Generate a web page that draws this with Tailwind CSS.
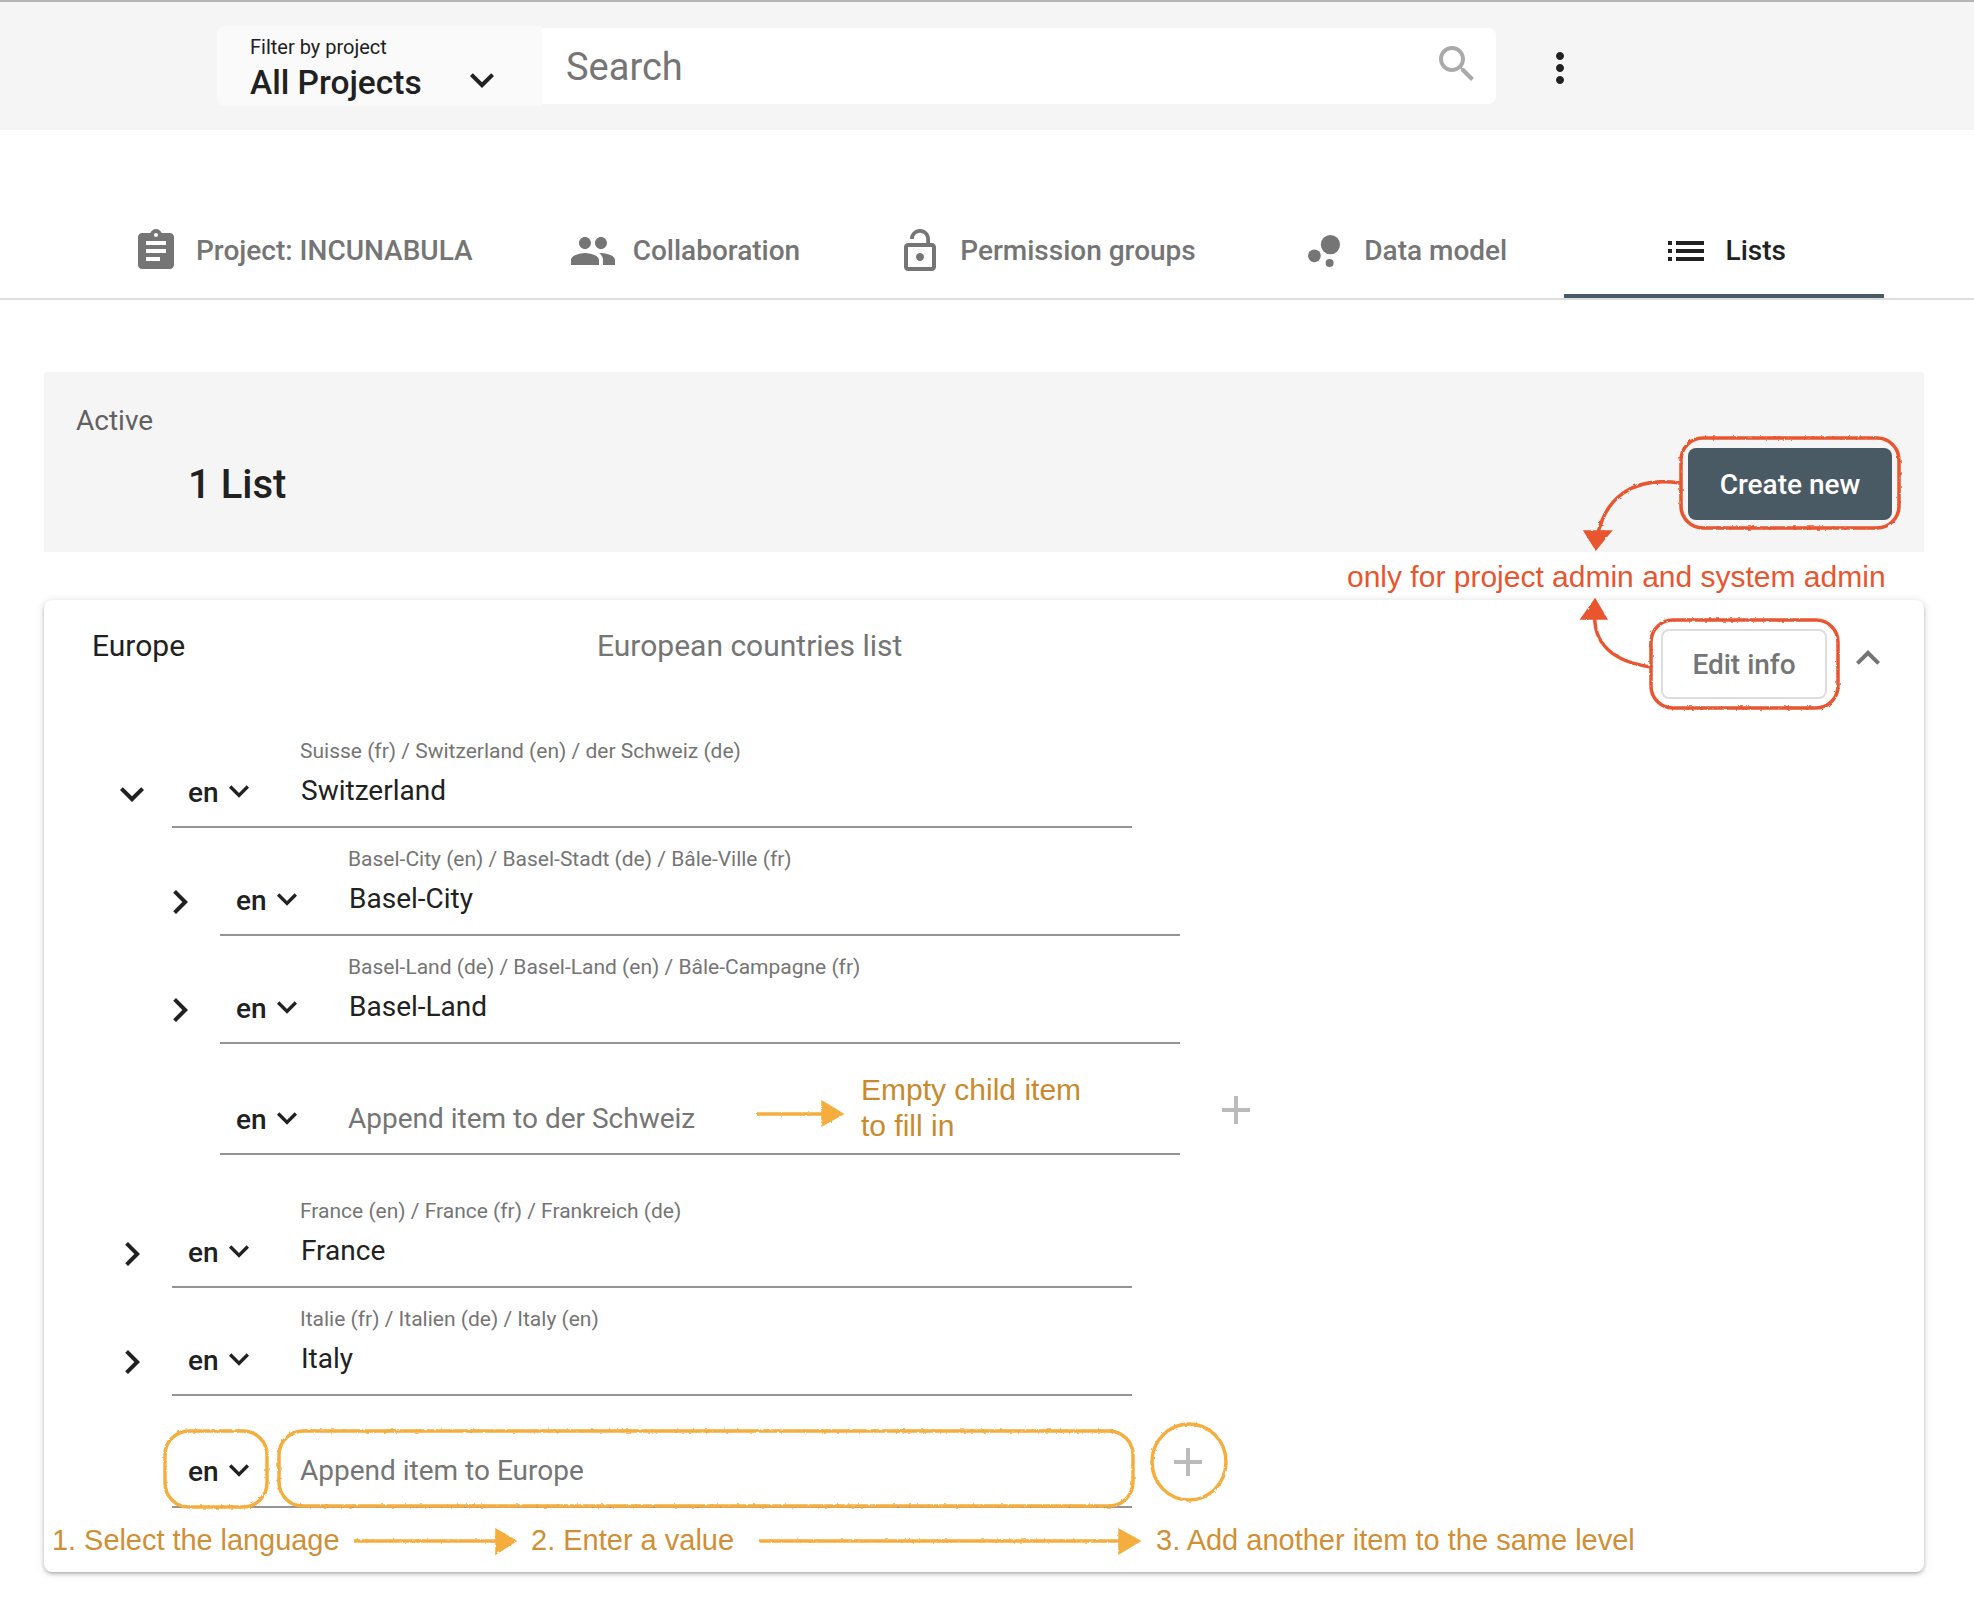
<!DOCTYPE html>
<html lang="en">
<head>
    <meta charset="UTF-8">
    <meta name="viewport" content="width=device-width, initial-scale=1.0">
    <title>Lists - INCUNABULA</title>
    <script src="https://cdn.jsdelivr.net/npm/@tailwindcss/browser@4"></script>
</head>
<body class="bg-white">
<div class="relative w-[1974px] h-[1624px] overflow-hidden font-[family-name:Roboto,sans-serif] text-[#212121]">

    <!-- Top bar -->
    <header class="h-[130px] border-t-2 border-[#b5b5b5] bg-[#f5f5f5] flex items-start pl-[217px]">
        <div class="w-[325px] h-[80px] mt-[24px] bg-[#fafafa] rounded-l-lg pl-[33px] pt-[8px] relative">
            <p class="text-[20px] leading-[26px]">Filter by project</p>
            <p class="text-[33.5px] leading-[44px] font-medium mt-[1px]">All Projects</p>
            <svg class="absolute left-[241px] top-[30px] w-[48px] h-[48px] fill-[#212121]" viewBox="0 0 24 24"><path d="M7.41 8.59L12 13.17l4.59-4.58L18 10l-6 6-6-6 1.41-1.41z"/></svg>
        </div>
        <div class="w-[954px] h-[76px] mt-[26px] bg-white rounded-r-lg flex items-center justify-between pl-[24px] pr-[15px]">
            <span class="text-[38px] text-[#757575] pt-[2px]">Search</span>
            <svg class="w-[48px] h-[48px] fill-[#aaaaaa] mb-[4px]" viewBox="0 0 24 24"><path d="M15.5 14h-.79l-.28-.27C15.41 12.59 16 11.11 16 9.5 16 5.91 13.09 3 9.5 3S3 5.91 3 9.5 5.91 16 9.5 16c1.61 0 3.09-.59 4.23-1.57l.27.28v.79l5 4.99L20.49 19l-4.99-5zm-6 0C7.01 14 5 11.99 5 9.5S7.01 5 9.5 5 14 7.01 14 9.5 11.99 14 9.5 14z"/></svg>
        </div>
        <svg class="w-[48px] h-[48px] ml-[40px] mt-[42px] fill-[#212121]" viewBox="0 0 24 24"><path d="M12 8c1.1 0 2-.9 2-2s-.9-2-2-2-2 .9-2 2 .9 2 2 2zm0 2c-1.1 0-2 .9-2 2s.9 2 2 2 2-.9 2-2-.9-2-2-2zm0 6c-1.1 0-2 .9-2 2s.9 2 2 2 2-.9 2-2-.9-2-2-2z"/></svg>
    </header>

    <!-- Tabs -->
    <nav class="mt-[70px] h-[100px] border-b-2 border-[#dddddd] flex pl-[84px] text-[28px] font-medium text-[#757575]">
        <a class="h-full min-w-[320px] px-12 pt-[8px] border-b-4 border-transparent flex items-center justify-center">
            <svg class="w-[48px] h-[48px] mr-[16px] fill-[#757575]" viewBox="0 0 24 24"><path d="M19 3h-4.18C14.4 1.84 13.3 1 12 1c-1.3 0-2.4.84-2.82 2H5c-1.1 0-2 .9-2 2v14c0 1.1.9 2 2 2h14c1.1 0 2-.9 2-2V5c0-1.1-.9-2-2-2zm-7 0c.55 0 1 .45 1 1s-.45 1-1 1-1-.45-1-1 .45-1 1-1zm2 14H7v-2h7v2zm3-4H7v-2h10v2zm0-4H7V7h10v2z"/></svg>
            <span>Project: INCUNABULA</span>
        </a>
        <a class="h-full min-w-[320px] px-12 pt-[8px] border-b-4 border-transparent flex items-center justify-center">
            <svg class="w-[48px] h-[48px] mr-[16px] fill-[#757575]" viewBox="0 0 24 24"><path d="M16 11c1.66 0 2.99-1.34 2.99-3S17.66 5 16 5c-1.66 0-3 1.34-3 3s1.34 3 3 3zm-8 0c1.66 0 2.99-1.34 2.99-3S9.66 5 8 5C6.34 5 5 6.34 5 8s1.34 3 3 3zm0 2c-2.33 0-7 1.17-7 3.5V19h14v-2.5c0-2.33-4.67-3.5-7-3.5zm8 0c-.29 0-.62.02-.97.05 1.16.84 1.97 1.97 1.97 3.45V19h6v-2.5c0-2.33-4.67-3.5-7-3.5z"/></svg>
            <span>Collaboration</span>
        </a>
        <a class="h-full min-w-[320px] px-12 pt-[8px] border-b-4 border-transparent flex items-center justify-center">
            <svg class="w-[48px] h-[48px] mr-[16px] fill-[#757575]" viewBox="0 0 24 24"><path d="M12 17c1.1 0 2-.9 2-2s-.9-2-2-2-2 .9-2 2 .9 2 2 2zm6-9h-1V6c0-2.76-2.24-5-5-5S7 3.24 7 6h1.9c0-1.71 1.39-3.1 3.1-3.1 1.71 0 3.1 1.39 3.1 3.1v2H6c-1.1 0-2 .9-2 2v10c0 1.1.9 2 2 2h12c1.1 0 2-.9 2-2V10c0-1.1-.9-2-2-2zm0 12H6V10h12v10z"/></svg>
            <span>Permission groups</span>
        </a>
        <a class="h-full min-w-[320px] px-12 pt-[8px] border-b-4 border-transparent flex items-center justify-center">
            <svg class="w-[48px] h-[48px] mr-[16px] fill-[#757575]" viewBox="0 0 24 24"><circle cx="7.2" cy="14.4" r="3.2"/><circle cx="14.8" cy="18" r="2"/><circle cx="15.2" cy="8.8" r="4.8"/></svg>
            <span>Data model</span>
        </a>
        <a class="h-full min-w-[320px] px-12 pt-[8px] border-b-4 border-[#4a5a65] text-[#212121] flex items-center justify-center">
            <svg class="w-[48px] h-[48px] mr-[16px] fill-[#212121]" viewBox="0 0 24 24"><path d="M3 13h2v-2H3v2zm0 4h2v-2H3v2zm0-8h2V7H3v2zm4 4h14v-2H7v2zm0 4h14v-2H7v2zM7 7v2h14V7H7z"/></svg>
            <span>Lists</span>
        </a>
    </nav>

    <!-- Active summary -->
    <section class="w-[1880px] ml-[44px] mt-[72px] h-[180px] bg-[#f5f5f5] rounded-t flex justify-between items-end pb-[32px] pr-[32px]">
        <div class="pl-[32px] mb-[11px]">
            <p class="text-[28px] leading-[40px] text-[#616161]">Active</p>
            <p class="text-[40px] leading-[48px] font-medium pl-[112px] mt-[20px]">1 List</p>
        </div>
        <button class="w-[204px] h-[72px] pt-[2px] bg-[#4a5a65] rounded-lg text-white text-[28px] font-medium">Create new</button>
    </section>

    <!-- List card -->
    <section class="w-[1880px] ml-[44px] mt-[48px] h-[972px] bg-white rounded-lg shadow-[0_2px_4px_-1px_rgba(0,0,0,0.35),0_1px_10px_rgba(0,0,0,0.12)]">
        <div class="h-[120px] flex items-start pt-[26px] pl-[48px] pr-[32px] text-[30px] leading-[40px]">
            <span class="w-[505px]">Europe</span>
            <span class="text-[#757575]">European countries list</span>
            <button class="ml-auto w-[166px] h-[70px] mt-[3px] pt-[2px] border-2 border-[#dddddd] rounded-lg text-[28px] font-medium text-[#757575]">Edit info</button>
            <svg class="w-[48px] h-[48px] ml-[17px] mt-[8px] fill-[#757575]" viewBox="0 0 24 24"><path d="M7.41 15.41L12 10.83l4.59 4.58L18 14l-6-6-6 6z"/></svg>
        </div>

        <!-- Switzerland -->
        <div class="flex h-[108px] ml-[48px]">
            <div class="w-[80px] flex justify-center items-end pb-[10px]">
                <svg class="w-[48px] h-[48px] fill-[#212121]" viewBox="0 0 24 24"><path d="M7.41 8.59L12 13.17l4.59-4.58L18 10l-6 6-6-6 1.41-1.41z"/></svg>
            </div>
            <div class="w-[960px] border-b-2 border-[#949494] flex">
                <div class="w-[128px] pl-[16px] pb-[13px] flex items-end text-[28px] leading-[40px] font-medium">
                    <span>en</span>
                    <svg class="w-[40px] h-[40px] -mt-[2px] mb-[2px] fill-[#212121]" viewBox="0 0 24 24"><path d="M7.41 8.59L12 13.17l4.59-4.58L18 10l-6 6-6-6 1.41-1.41z"/></svg>
                </div>
                <div class="pt-[17px]">
                    <p class="text-[21px] leading-[28px] text-[#757575]">Suisse (fr) / Switzerland (en) / der Schweiz (de)</p>
                    <p class="text-[28px] leading-[40px] mt-[6px] pl-[1px]">Switzerland</p>
                </div>
            </div>
        </div>

        <!-- Basel-City -->
        <div class="flex h-[108px] ml-[96px]">
            <div class="w-[80px] flex justify-center items-end pb-[10px]">
                <svg class="w-[48px] h-[48px] fill-[#212121]" viewBox="0 0 24 24"><path d="M8.59 16.59L13.17 12 8.59 7.41 10 6l6 6-6 6-1.41-1.41z"/></svg>
            </div>
            <div class="w-[960px] border-b-2 border-[#949494] flex">
                <div class="w-[128px] pl-[16px] pb-[13px] flex items-end text-[28px] leading-[40px] font-medium">
                    <span>en</span>
                    <svg class="w-[40px] h-[40px] -mt-[2px] mb-[2px] fill-[#212121]" viewBox="0 0 24 24"><path d="M7.41 8.59L12 13.17l4.59-4.58L18 10l-6 6-6-6 1.41-1.41z"/></svg>
                </div>
                <div class="pt-[17px]">
                    <p class="text-[21px] leading-[28px] text-[#757575]">Basel-City (en) / Basel-Stadt (de) / Bâle-Ville (fr)</p>
                    <p class="text-[28px] leading-[40px] mt-[6px] pl-[1px]">Basel-City</p>
                </div>
            </div>
        </div>

        <!-- Basel-Land -->
        <div class="flex h-[108px] ml-[96px]">
            <div class="w-[80px] flex justify-center items-end pb-[10px]">
                <svg class="w-[48px] h-[48px] fill-[#212121]" viewBox="0 0 24 24"><path d="M8.59 16.59L13.17 12 8.59 7.41 10 6l6 6-6 6-1.41-1.41z"/></svg>
            </div>
            <div class="w-[960px] border-b-2 border-[#949494] flex">
                <div class="w-[128px] pl-[16px] pb-[13px] flex items-end text-[28px] leading-[40px] font-medium">
                    <span>en</span>
                    <svg class="w-[40px] h-[40px] -mt-[2px] mb-[2px] fill-[#212121]" viewBox="0 0 24 24"><path d="M7.41 8.59L12 13.17l4.59-4.58L18 10l-6 6-6-6 1.41-1.41z"/></svg>
                </div>
                <div class="pt-[17px]">
                    <p class="text-[21px] leading-[28px] text-[#757575]">Basel-Land (de) / Basel-Land (en) / Bâle-Campagne (fr)</p>
                    <p class="text-[28px] leading-[40px] mt-[6px] pl-[1px]">Basel-Land</p>
                </div>
            </div>
        </div>

        <!-- Append child -->
        <div class="flex h-[111px] ml-[176px]">
            <div class="w-[960px] border-b-2 border-[#949494] flex">
                <div class="w-[128px] pl-[16px] pb-[13px] flex items-end text-[28px] leading-[40px] font-medium">
                    <span>en</span>
                    <svg class="w-[40px] h-[40px] -mt-[2px] mb-[2px] fill-[#212121]" viewBox="0 0 24 24"><path d="M7.41 8.59L12 13.17l4.59-4.58L18 10l-6 6-6-6 1.41-1.41z"/></svg>
                </div>
                <div class="flex items-end pb-[14px]">
                    <p class="text-[28px] leading-[40px] text-[#757575]">Append item to der Schweiz</p>
                </div>
            </div>
            <svg class="w-[48px] h-[48px] ml-[32px] mt-[42px] fill-[#bbbbbb]" viewBox="0 0 24 24"><path d="M19 13h-6v6h-2v-6H5v-2h6V5h2v6h6v2z"/></svg>
        </div>

        <!-- France -->
        <div class="flex h-[108px] ml-[48px] mt-[25px]">
            <div class="w-[80px] flex justify-center items-end pb-[10px]">
                <svg class="w-[48px] h-[48px] fill-[#212121]" viewBox="0 0 24 24"><path d="M8.59 16.59L13.17 12 8.59 7.41 10 6l6 6-6 6-1.41-1.41z"/></svg>
            </div>
            <div class="w-[960px] border-b-2 border-[#949494] flex">
                <div class="w-[128px] pl-[16px] pb-[13px] flex items-end text-[28px] leading-[40px] font-medium">
                    <span>en</span>
                    <svg class="w-[40px] h-[40px] -mt-[2px] mb-[2px] fill-[#212121]" viewBox="0 0 24 24"><path d="M7.41 8.59L12 13.17l4.59-4.58L18 10l-6 6-6-6 1.41-1.41z"/></svg>
                </div>
                <div class="pt-[17px]">
                    <p class="text-[21px] leading-[28px] text-[#757575]">France (en) / France (fr) / Frankreich (de)</p>
                    <p class="text-[28px] leading-[40px] mt-[6px] pl-[1px]">France</p>
                </div>
            </div>
        </div>

        <!-- Italy -->
        <div class="flex h-[108px] ml-[48px]">
            <div class="w-[80px] flex justify-center items-end pb-[10px]">
                <svg class="w-[48px] h-[48px] fill-[#212121]" viewBox="0 0 24 24"><path d="M8.59 16.59L13.17 12 8.59 7.41 10 6l6 6-6 6-1.41-1.41z"/></svg>
            </div>
            <div class="w-[960px] border-b-2 border-[#949494] flex">
                <div class="w-[128px] pl-[16px] pb-[13px] flex items-end text-[28px] leading-[40px] font-medium">
                    <span>en</span>
                    <svg class="w-[40px] h-[40px] -mt-[2px] mb-[2px] fill-[#212121]" viewBox="0 0 24 24"><path d="M7.41 8.59L12 13.17l4.59-4.58L18 10l-6 6-6-6 1.41-1.41z"/></svg>
                </div>
                <div class="pt-[17px]">
                    <p class="text-[21px] leading-[28px] text-[#757575]">Italie (fr) / Italien (de) / Italy (en)</p>
                    <p class="text-[28px] leading-[40px] mt-[6px] pl-[1px]">Italy</p>
                </div>
            </div>
        </div>

        <!-- Append root item -->
        <div class="flex h-[112px] ml-[128px]">
            <div class="w-[960px] border-b-2 border-[#949494] flex">
                <div class="w-[128px] pl-[16px] pb-[14px] flex items-end text-[28px] leading-[40px] font-medium">
                    <span>en</span>
                    <svg class="w-[40px] h-[40px] -mt-[2px] mb-[2px] fill-[#212121]" viewBox="0 0 24 24"><path d="M7.41 8.59L12 13.17l4.59-4.58L18 10l-6 6-6-6 1.41-1.41z"/></svg>
                </div>
                <div class="flex items-end pb-[15px]">
                    <p class="text-[28px] leading-[40px] text-[#757575]">Append item to Europe</p>
                </div>
            </div>
            <svg class="w-[48px] h-[48px] ml-[32px] mt-[42px] fill-[#bbbbbb]" viewBox="0 0 24 24"><path d="M19 13h-6v6h-2v-6H5v-2h6V5h2v6h6v2z"/></svg>
        </div>
    </section>

    <!-- Hand drawn annotations on top of the screenshot -->
    <svg class="absolute left-0 top-0 w-[1974px] h-[1624px] pointer-events-none" viewBox="0 0 1974 1624" fill="none">
        <defs>
            <filter id="rough" x="-5%" y="-5%" width="110%" height="110%">
                <feTurbulence type="fractalNoise" baseFrequency="0.25" numOctaves="2" seed="3"/>
                <feDisplacementMap in="SourceGraphic" scale="2.5"/>
            </filter>
        </defs>
        <g filter="url(#rough)" stroke="#e9552e" stroke-width="3.5">
            <rect x="1681" y="438" width="218" height="90" rx="22"/>
            <rect x="1651" y="620" width="187" height="88" rx="22"/>
            <path d="M1680 483 C1630 476 1604 500 1597 538"/>
            <path d="M1651 667 C1615 662 1592 645 1595 612"/>
            <path d="M1586 532 L1609 532 L1596 548 Z" fill="#e9552e"/>
            <path d="M1583 618 L1605 618 L1595 601 Z" fill="#e9552e"/>
        </g>
        <g filter="url(#rough)" stroke="#f5ad3c" stroke-width="3.5">
            <rect x="165" y="1431" width="102" height="76" rx="24"/>
            <rect x="279" y="1431" width="854" height="75" rx="24"/>
            <ellipse cx="1189" cy="1462" rx="37" ry="38"/>
            <path d="M757 1114 H826"/>
            <path d="M354 1541 H500"/>
            <path d="M759 1541 H1123"/>
            <path d="M823 1103 L841 1114 L823 1124 Z" fill="#f5ad3c"/>
            <path d="M497 1531 L514 1541 L497 1552 Z" fill="#f5ad3c"/>
            <path d="M1120 1531 L1138 1541 L1120 1552 Z" fill="#f5ad3c"/>
        </g>
    </svg>

    <p class="absolute left-[1347px] top-[558px] text-[30px] leading-[38px] text-[#e9552e] whitespace-nowrap font-[family-name:'Liberation_Sans',sans-serif]">only for project admin and system admin</p>
    <div class="absolute left-[861px] top-[1072px] text-[30px] leading-[36px] text-[#c98a2e] whitespace-nowrap font-[family-name:'Liberation_Sans',sans-serif]">
        <p>Empty child item</p>
        <p>to fill in</p>
    </div>
    <div class="absolute left-[52px] top-[1521px] w-[1600px] flex text-[29px] leading-[38px] text-[#d08f35] whitespace-nowrap font-[family-name:'Liberation_Sans',sans-serif]">
        <span class="w-[479px] tracking-[-0.05px]">1. Select the language</span>
        <span class="w-[625px]">2. Enter a value</span>
        <span>3. Add another item to the same level</span>
    </div>
</div>
</body>
</html>
